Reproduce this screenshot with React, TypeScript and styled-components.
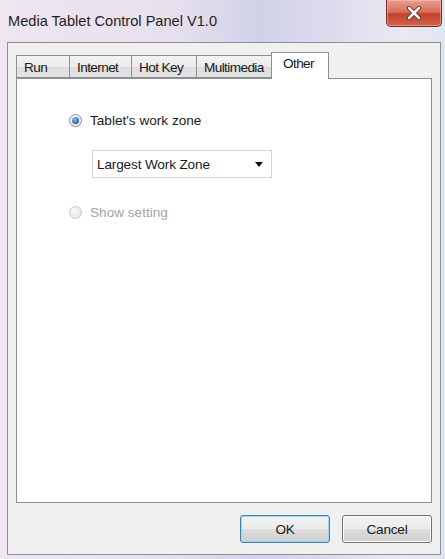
import React from 'react';
import styled, { createGlobalStyle } from 'styled-components';

const GlobalStyle = createGlobalStyle`
    html, body {
        margin: 0;
        padding: 0;
        background: #ffffff;
    }
    body {
        font-family: 'Liberation Sans', Arial, sans-serif;
    }
`

const Window = styled.div`
    width: 445px;
    height: 559px;
    display: flex;
    flex-direction: column;
    background: linear-gradient(90deg, #eee7f0 0%, #e6dfee 40%, #d0d2e8 58%, #dedbee 75%, #ece8f2 90%, #dfe6f0 100%);
    box-sizing: border-box;
    overflow: hidden;
`

const TitleBar = styled.div`
    height: 42px;
    display: flex;
    justify-content: space-between;
    align-items: flex-start;
    flex-shrink: 0;
`

const Title = styled.div`
    padding: 13px 0 0 8px;
    font-size: 14.6px;
    color: #1e1e1e;
`

const CloseButton = styled.div`
    width: 56px;
    height: 27px;
    margin-right: 3px;
    box-sizing: border-box;
    border: 1px solid #6f2a22;
    border-top: none;
    border-radius: 0 0 5px 5px;
    background: linear-gradient(180deg, #e9a08f 0%, #d7705c 45%, #c2412c 55%, #d0644a 100%);
    display: flex;
    align-items: center;
    justify-content: center;
    box-shadow: inset 0 0 0 1px rgba(255, 200, 190, 0.5);
`

const Client = styled.div`
    flex: 1;
    margin: 0 4px 4px 7px;
    background: #f0f0f0;
    border: 1px solid #8e8e96;
    box-sizing: border-box;
    padding: 9px 7px 0 8px;
    display: flex;
    flex-direction: column;
`

const TabRow = styled.div`
    display: flex;
    align-items: flex-end;
    height: 26px;
    position: relative;
    z-index: 1;
`

const Tab = styled.div<{ $w: number; $active?: boolean }>`
    width: ${p => p.$w}px;
    height: ${p => (p.$active ? 27 : 23)}px;
    box-sizing: border-box;
    border: 1px solid #8c8e94;
    border-right: ${p => (p.$active ? '1px solid #8c8e94' : 'none')};
    border-bottom: ${p => (p.$active ? 'none' : '1px solid #8c8e94')};
    margin-bottom: ${p => (p.$active ? -1 : 0)}px;
    background: ${p => (p.$active ? '#ffffff' : 'linear-gradient(180deg, #f3f3f3 0%, #ebebeb 50%, #dddddd 51%, #e4e4e4 100%)')};
    font-size: 13.6px;
    letter-spacing: -0.6px;
    color: #1a1a1a;
    padding: ${p => (p.$active ? '3px 0 0 11px' : '4px 0 0 7px')};
    &:last-child {
        border-right: 1px solid #8c8e94;
    }
`

const Panel = styled.div`
    width: 416px;
    height: 425px;
    box-sizing: border-box;
    background: #ffffff;
    border: 1px solid #8c8e94;
    padding: 33px 0 0 52px;
    display: flex;
    flex-direction: column;
`

const RadioRow = styled.div<{ $disabled?: boolean }>`
    display: flex;
    align-items: center;
    gap: 8px;
    height: 16px;
    font-size: 13.6px;
    color: ${p => (p.$disabled ? '#a3a3a3' : '#1a1a1a')};
`

const RadioDot = styled.span<{ $checked?: boolean; $disabled?: boolean }>`
    width: 13px;
    height: 13px;
    border-radius: 50%;
    box-sizing: border-box;
    border: 1px solid ${p => (p.$disabled ? '#c8c8c8' : '#8a8f99')};
    background: ${p => (p.$disabled ? 'radial-gradient(circle at 40% 35%, #f8f8f8, #e2e2e2)' : 'radial-gradient(circle at 40% 35%, #ffffff, #dcdee3)')};
    display: flex;
    align-items: center;
    justify-content: center;
    &::after {
        content: '';
        display: ${p => (p.$checked ? 'block' : 'none')};
        width: 7px;
        height: 7px;
        border-radius: 50%;
        background: radial-gradient(circle at 40% 35%, #8fc4f2, #1c5fa8 70%, #163f73);
    }
`

const Select = styled.div`
    margin: 22px 0 0 23px;
    width: 180px;
    height: 28px;
    box-sizing: border-box;
    border: 1px solid #d4d4d4;
    background: #ffffff;
    display: flex;
    align-items: center;
    justify-content: space-between;
    padding: 0 8px 0 4px;
    font-size: 13.6px;
    letter-spacing: -0.15px;
    color: #1a1a1a;
`

const ShowRow = styled(RadioRow)`
    margin-top: 26px;
`

const ButtonRow = styled.div`
    display: flex;
    justify-content: flex-end;
    gap: 12px;
    width: 416px;
    margin-top: 12px;
`

const Button = styled.div<{ $default?: boolean }>`
    width: 90px;
    height: 28px;
    box-sizing: border-box;
    border: 1px solid ${p => (p.$default ? '#3c7fb1' : '#707070')};
    border-radius: 3px;
    background: linear-gradient(180deg, #f2f2f2 0%, #ebebeb 50%, #dddddd 51%, #cfcfcf 100%);
    box-shadow: ${p => (p.$default ? 'inset 0 0 0 1px #9fd5f5' : 'inset 0 0 0 1px #fcfcfc')};
    display: flex;
    align-items: center;
    justify-content: center;
    font-size: 13.6px;
    letter-spacing: -0.2px;
    color: #1a1a1a;
`

const tabs = [
    { label: 'Run', w: 53 },
    { label: 'Internet', w: 62 },
    { label: 'Hot Key', w: 65 },
    { label: 'Multimedia', w: 75 },
    { label: 'Other', w: 58, active: true },
]

export default function App() {
    return (
        <>
            <GlobalStyle />
            <Window>
                <TitleBar>
                    <Title>Media Tablet Control Panel V1.0</Title>
                    <CloseButton>
                        <svg width="16" height="14" viewBox="0 0 16 14">
                            <path d="M3 2 L13 12 M13 2 L3 12" stroke="#5a2018" strokeWidth="4.2" strokeLinecap="round" />
                            <path d="M3 2 L13 12 M13 2 L3 12" stroke="#ffffff" strokeWidth="2.6" strokeLinecap="round" />
                        </svg>
                    </CloseButton>
                </TitleBar>
                <Client>
                    <TabRow>
                        {tabs.map(t => (
                            <Tab key={t.label} $w={t.w} $active={t.active}>{t.label}</Tab>
                        ))}
                    </TabRow>
                    <Panel>
                        <RadioRow>
                            <RadioDot $checked />
                            Tablet's work zone
                        </RadioRow>
                        <Select>
                            <span>Largest Work Zone</span>
                            <svg width="8" height="5" viewBox="0 0 8 5">
                                <path d="M0 0 L8 0 L4 5 Z" fill="#111111" />
                            </svg>
                        </Select>
                        <ShowRow $disabled>
                            <RadioDot $disabled />
                            Show setting
                        </ShowRow>
                    </Panel>
                    <ButtonRow>
                        <Button $default>OK</Button>
                        <Button>Cancel</Button>
                    </ButtonRow>
                </Client>
            </Window>
        </>
    )
}
